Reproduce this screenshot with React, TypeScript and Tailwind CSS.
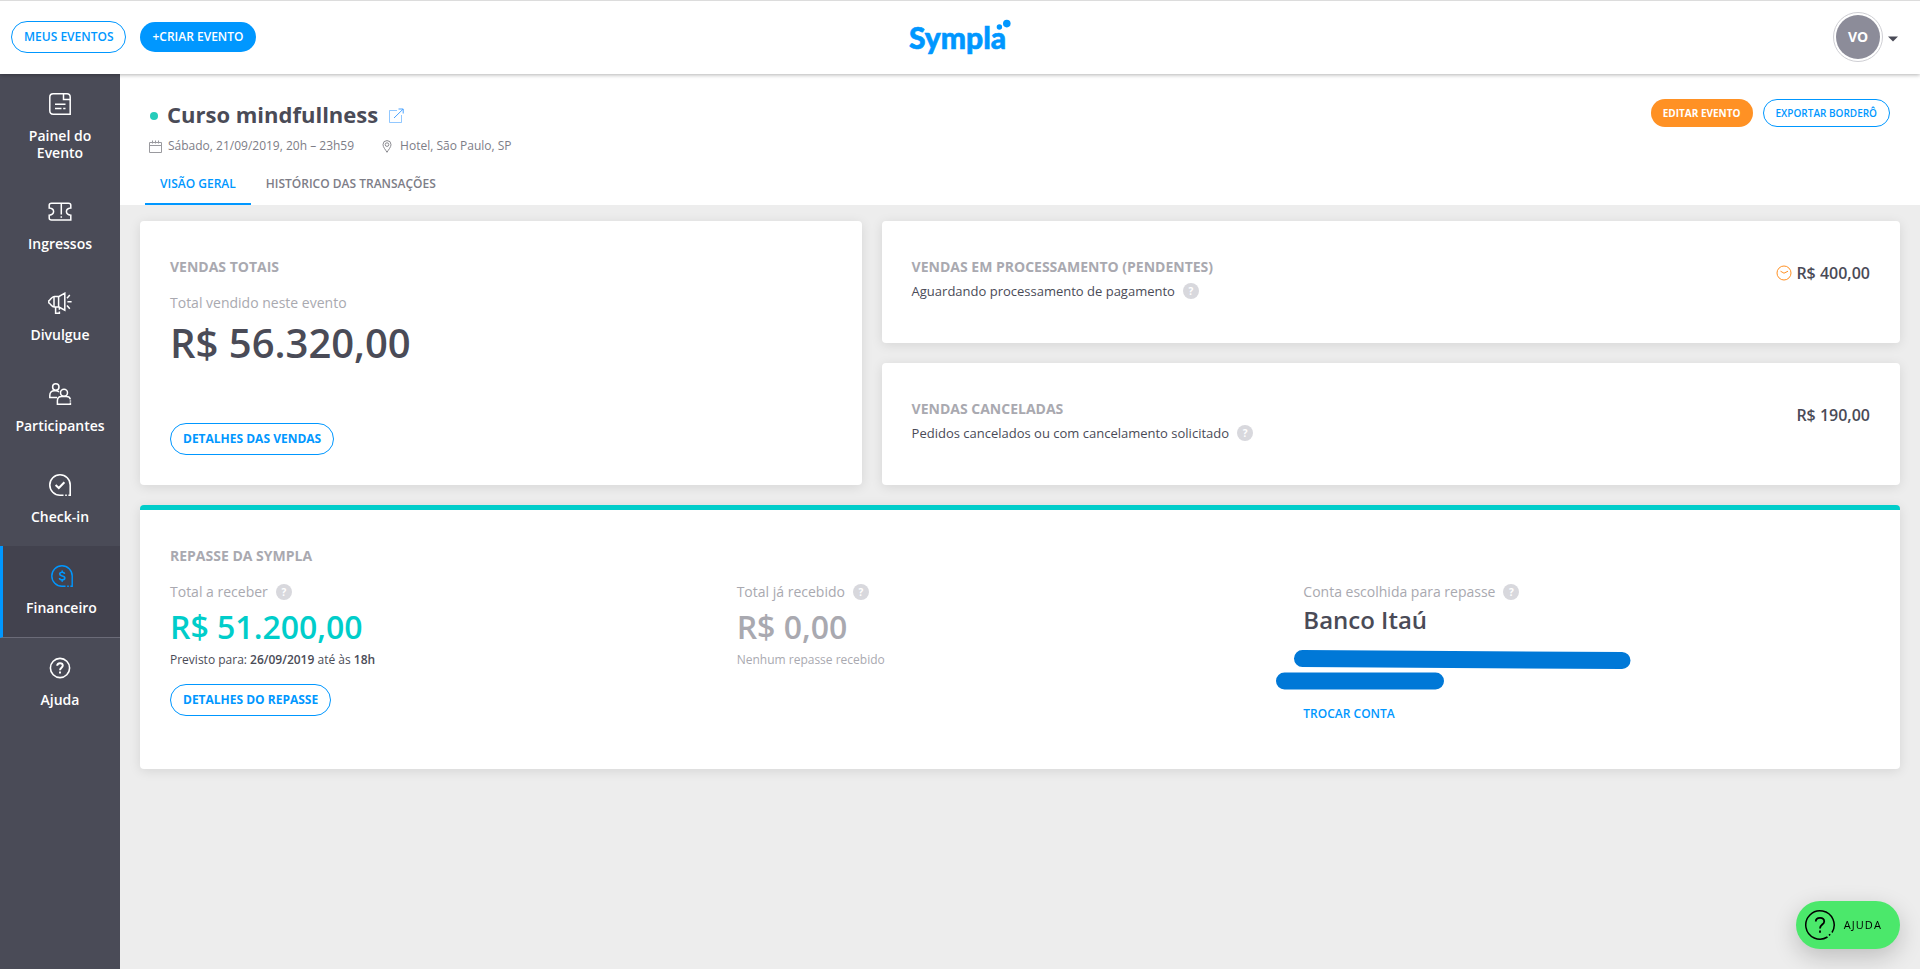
import React from 'react';
import type { ReactNode } from 'react';

const PanelIcon = () => (
    <svg viewBox="0 0 24 24" className="w-6 h-6" fill="none" stroke="currentColor" strokeWidth="1.5">
        <path d="M15.5 1.8H5.2C3.2 1.8 1.8 3.2 1.8 5.2V18.8C1.8 20.8 3.2 22.2 5.2 22.2H22.2V7.5" />
        <path d="M15.5 1.8V7.5H22.2V5C22.2 3 21 1.8 19 1.8Z" />
        <path d="M7 12.2H17.5M7 16.5H13.5M15.2 16.5H17.5" />
    </svg>
);

const TicketIcon = () => (
    <svg viewBox="0 0 24 24" className="w-6 h-6" fill="none" stroke="currentColor" strokeWidth="1.5">
        <path d="M3.5 3.2H20.5C22 3.2 22.8 4 22.8 5.2V8C20.6 8.2 18.4 9.6 18.4 11.6C18.4 13.6 20.6 15 22.8 15.2V20H3.5C2 20 1.2 19.2 1.2 18V15.2C3.4 15 5.6 13.6 5.6 11.6C5.6 9.6 3.4 8.2 1.2 8V5.2C1.2 4 2 3.2 3.5 3.2Z" />
        <path d="M13.3 3.2V14.6M13.3 16.2V17.8" />
    </svg>
);

const MegaphoneIcon = () => (
    <svg viewBox="0 0 24 24" className="w-6 h-6" fill="none" stroke="currentColor" strokeWidth="1.5">
        <path d="M16.8 2.2L11 5.4H6.4C3.6 5.4 2.8 8.8 0.8 9.8V11.8C2.8 12.8 3.6 16 6.4 16H11L16.8 19.2Z" />
        <path d="M6 5.4V16M10.6 5.4V16M7.6 16V22.2H11.4V20.4M11.4 18.8V16" />
        <path d="M19 7.2L21.8 4M19.4 10.8H23.6M19 14.4L21.8 17.8" />
    </svg>
);

const PeopleIcon = () => (
    <svg viewBox="0 0 24 24" className="w-6 h-6" fill="none" stroke="currentColor" strokeWidth="1.5">
        <circle cx="7.8" cy="5" r="3.2" />
        <path d="M9 15.4H1.8V13.4C1.8 10.4 3.4 8.8 6.4 8.8H7.8C9.2 8.8 10.2 9.2 11 10" />
        <circle cx="16" cy="10.8" r="3.5" />
        <path d="M22.4 17.4C22 15.6 20.4 14.6 18.4 14.6H13.6C11 14.6 9.4 16.2 9.4 18.8V22.2H22.4V20.6" />
        <path d="M22.4 18.4V19.6" />
    </svg>
);

const CheckinIcon = () => (
    <svg viewBox="0 0 24 24" className="w-6 h-6" fill="none" stroke="currentColor" strokeWidth="1.6">
        <path d="M15.5 22.2H12A10.2 10.2 0 1 1 22.2 12V22.2H20.4M17.2 22.2H18.8" />
        <path d="M7.6 12L10.8 15L16.4 9.2" strokeWidth="2" />
    </svg>
);

const FinanceIcon = () => (
    <svg viewBox="0 0 24 24" className="w-6 h-6" fill="none" stroke="#0097ff" strokeWidth="1.4">
        <path d="M15.5 22.2H12A10.2 10.2 0 1 1 22.2 12V22.2H20.4M17.2 22.2H18.8" />
        <path d="M14.6 9.8C14.4 8.7 13.4 8.2 12.2 8.2C10.8 8.2 9.7 8.9 9.7 10.1C9.7 12.7 14.8 11.3 14.8 14C14.8 15.2 13.6 15.9 12.2 15.9C10.8 15.9 9.6 15.2 9.5 14M12.2 6.4V8.2M12.2 15.9V17.7" strokeWidth="1.6" />
    </svg>
);

const HelpIcon = () => (
    <svg viewBox="0 0 24 24" className="w-6 h-6" fill="none" stroke="currentColor" strokeWidth="1.6">
        <circle cx="12" cy="12" r="9.6" />
        <path d="M9.2 9.8C9.2 8.2 10.4 7.2 12 7.2C13.6 7.2 14.8 8.2 14.8 9.6C14.8 11.6 12 11.8 12 14.2M12 15.6V17.4" strokeWidth="1.9" />
    </svg>
);

const Logo = () => (
    <svg viewBox="0 0 104 42" className="w-[104px] h-[42px]" fill="#0097ff" role="img" aria-label="Sympla">
        <text x="1" y="33" fontFamily="Lato, sans-serif" fontWeight="900" fontSize="30" stroke="#0097ff" strokeWidth="0.6">
            Sympla
        </text>
        <circle cx="91.4" cy="11" r="2.7" />
        <circle cx="98.8" cy="7.6" r="3.8" />
    </svg>
);

const menu = [
    { label: 'Painel do Evento', icon: PanelIcon },
    { label: 'Ingressos', icon: TicketIcon },
    { label: 'Divulgue', icon: MegaphoneIcon },
    { label: 'Participantes', icon: PeopleIcon },
    { label: 'Check-in', icon: CheckinIcon },
    { label: 'Financeiro', icon: FinanceIcon, active: true },
    { label: 'Ajuda', icon: HelpIcon }
];

const HelpDot = () => (
    <button
        type="button"
        aria-label="Mais informações"
        className="w-4 h-4 shrink-0 rounded-full bg-[#d8d8dd] text-white text-[10px] leading-4 font-bold text-center"
    >
        ?
    </button>
);

const Card = ({ className = '', children }: { className?: string; children: ReactNode }) => (
    <section className={`bg-white rounded shadow-[0_2px_12px_rgba(0,0,0,0.1)] px-[30px] pt-9 pb-[30px] ${className}`}>
        {children}
    </section>
);

const CardTitle = ({ children }: { children: ReactNode }) => (
    <h2 className="text-sm leading-5 font-bold text-[#a9a9b0]">{children}</h2>
);

const OutlineButton = ({ className = '', children }: { className?: string; children: ReactNode }) => (
    <button
        type="button"
        className={`h-8 px-3 self-start rounded-full border border-[#0097ff] text-[#0097ff] text-xs font-bold whitespace-nowrap ${className}`}
    >
        {children}
    </button>
);

const App = () => {
    return (
        <div className="min-h-screen flex flex-col bg-[#ededed] text-[#4a4b57] font-['Open_Sans',sans-serif]">
            {/* Top bar */}
            <header className="relative z-10 h-[74px] grid grid-cols-3 items-center bg-white border-t border-[#dcdcdc] px-[11px] pb-px shadow-[0_1px_4px_rgba(0,0,0,0.3)]">
                <div className="flex items-center gap-3.5">
                    <button type="button" className="h-8 px-3 rounded-full border border-[#0097ff] text-[#0097ff] text-xs font-semibold">
                        MEUS EVENTOS
                    </button>
                    <button type="button" className="h-[30px] px-3 rounded-full bg-[#0097ff] text-white text-xs font-semibold">
                        +CRIAR EVENTO
                    </button>
                </div>
                <a href="#" className="justify-self-center">
                    <Logo />
                </a>
                <button type="button" className="justify-self-end mr-2.5 flex items-center gap-1">
                    <span className="w-[50px] h-[50px] rounded-full border border-[#cfcfd4] p-0.5 flex">
                        <span className="flex-1 rounded-full bg-[#8c8c99] text-white text-sm font-bold flex items-center justify-center">
                            VO
                        </span>
                    </span>
                    <svg viewBox="0 0 12 6" className="w-3 h-1.5 mt-1" fill="#4a4b57">
                        <path d="M1 0.5H11L6 5.5Z" />
                    </svg>
                </button>
            </header>

            <div className="flex flex-1">
                {/* Side menu */}
                <nav className="w-[120px] shrink-0 bg-[#4a4b57] text-white">
                    {menu.map((item) => {
                        const Icon = item.icon;
                        return (
                            <a
                                key={item.label}
                                href="#"
                                className={`flex flex-col items-center gap-[11px] pt-[18px] pb-[21px] px-2.5 text-center text-sm leading-[17px] font-semibold ${item.active
                                    ? 'bg-[#42424e] border-b border-l-[3px] border-b-[#6b6b78] border-l-[#0097ff]'
                                    : ''
                                    }`}
                            >
                                <Icon />
                                <span>{item.label}</span>
                            </a>
                        );
                    })}
                </nav>

                <main className="flex-1 min-w-0">
                    {/* Event header */}
                    <div className="bg-white pl-[25px] pr-[30px] pt-6">
                        <div className="flex items-start justify-between">
                            <div className="pl-1">
                                <div className="flex items-center">
                                    <span className="w-2 h-2 mt-1 ml-px rounded-full bg-[#25ccba]"></span>
                                    <h1 className="ml-[9px] text-[22px] leading-8 font-bold">Curso mindfullness</h1>
                                    <a href="#" aria-label="Abrir página do evento" className="ml-2.5 mt-1">
                                        <svg viewBox="0 0 16 16" className="w-4 h-4" fill="none" stroke="#4aa3ff">
                                            <path d="M9 2.5H1.5V14.5H13.5V7" strokeOpacity="0.6" />
                                            <path d="M6 10L15 1.2M10.5 1H15.2V5.5" />
                                        </svg>
                                    </a>
                                </div>
                                <div className="flex items-center mt-1.5 text-xs leading-5 text-[#7d7d87]">
                                    <svg viewBox="0 0 13 13" className="w-[13px] h-[13px] mr-1.5" fill="none" stroke="#9a9a9f">
                                        <path d="M0.5 2.5H12.5V12.5H0.5ZM0.5 5.5H12.5M3.5 0.5V3.5M6.5 0.5V3.5M9.5 0.5V3.5" />
                                    </svg>
                                    <span>Sábado, 21/09/2019, 20h – 23h59</span>
                                    <svg viewBox="0 0 10 13" className="w-2.5 h-[13px] ml-7 mr-2" fill="none" stroke="#8a8a90">
                                        <path d="M5 12.3C3.5 9.6 1 7.2 1 4.6A4 4 0 0 1 9 4.6C9 7.2 6.5 9.6 5 12.3Z" />
                                        <circle cx="5" cy="4.6" r="1.8" />
                                    </svg>
                                    <span>Hotel, São Paulo, SP</span>
                                </div>
                            </div>
                            <div className="flex gap-2.5 mt-px">
                                <button type="button" className="h-7 px-3 rounded-full bg-[#ff9124] text-white text-[10px] font-bold">
                                    EDITAR EVENTO
                                </button>
                                <button type="button" className="h-7 px-3 rounded-full border border-[#0097ff] text-[#0097ff] text-[10px] font-semibold">
                                    EXPORTAR BORDERÔ
                                </button>
                            </div>
                        </div>
                        <div className="flex mt-1.5 text-xs leading-5 font-semibold">
                            <a href="#" className="px-[15px] pt-3 pb-[9px] border-b-2 border-[#0097ff] text-[#0097ff]">
                                VISÃO GERAL
                            </a>
                            <a href="#" className="px-[15px] pt-3 pb-[9px] border-b-2 border-transparent text-[#7d7d87]">
                                HISTÓRICO DAS TRANSAÇÕES
                            </a>
                        </div>
                    </div>

                    {/* Cards */}
                    <div className="flex flex-col gap-5 px-5 pt-4 pb-5">
                        <div className="flex gap-5">
                            <Card className="w-[41%] shrink-0 flex flex-col">
                                <CardTitle>VENDAS TOTAIS</CardTitle>
                                <p className="mt-4 text-sm leading-5 text-[#a9a9b0]">Total vendido neste evento</p>
                                <p className="text-[40px] leading-[60px] font-semibold">R$ 56.320,00</p>
                                <OutlineButton className="mt-auto">DETALHES DAS VENDAS</OutlineButton>
                            </Card>

                            <div className="flex-1 flex flex-col gap-5">
                                <Card className="min-h-[122px] flex justify-between items-start">
                                    <div>
                                        <CardTitle>VENDAS EM PROCESSAMENTO (PENDENTES)</CardTitle>
                                        <p className="mt-1 text-[13px] leading-5 flex items-center gap-2">
                                            Aguardando processamento de pagamento
                                            <HelpDot />
                                        </p>
                                    </div>
                                    <p className="text-base leading-8 font-semibold flex items-center gap-1">
                                        <svg viewBox="0 0 16 16" className="w-4 h-4" fill="none" stroke="#ff9124">
                                            <circle cx="8" cy="8" r="7" />
                                            <path d="M4.5 6.2L8 8.2L12 6.2" />
                                        </svg>
                                        R$ 400,00
                                    </p>
                                </Card>
                                <Card className="min-h-[122px] flex justify-between items-start">
                                    <div>
                                        <CardTitle>VENDAS CANCELADAS</CardTitle>
                                        <p className="mt-1 text-[13px] leading-5 flex items-center gap-2">
                                            Pedidos cancelados ou com cancelamento solicitado
                                            <HelpDot />
                                        </p>
                                    </div>
                                    <p className="text-base leading-8 font-semibold">R$ 190,00</p>
                                </Card>
                            </div>
                        </div>

                        <Card className="min-h-[264px] border-t-[5px] border-[#00cdca]">
                            <CardTitle>REPASSE DA SYMPLA</CardTitle>
                            <div className="grid grid-cols-3 mt-4">
                                <div className="flex flex-col">
                                    <p className="text-sm leading-5 text-[#a9a9b0] flex items-center gap-2">
                                        Total a receber
                                        <HelpDot />
                                    </p>
                                    <p className="text-[32px] leading-[50px] font-semibold text-[#00cdca]">R$ 51.200,00</p>
                                    <p className="text-xs leading-4">
                                        Previsto para: <strong className="font-semibold">26/09/2019</strong> até às{' '}
                                        <strong className="font-semibold">18h</strong>
                                    </p>
                                    <OutlineButton className="mt-4">DETALHES DO REPASSE</OutlineButton>
                                </div>
                                <div className="text-[#a9a9b0]">
                                    <p className="text-sm leading-5 flex items-center gap-2">
                                        Total já recebido
                                        <HelpDot />
                                    </p>
                                    <p className="text-[32px] leading-[50px] font-semibold">R$ 0,00</p>
                                    <p className="text-xs leading-4">Nenhum repasse recebido</p>
                                </div>
                                <div>
                                    <p className="text-sm leading-5 text-[#a9a9b0] flex items-center gap-2">
                                        Conta escolhida para repasse
                                        <HelpDot />
                                    </p>
                                    <p className="text-2xl leading-9 font-semibold">Banco Itaú</p>
                                    {/* Account data covered by marker strokes */}
                                    <svg viewBox="0 0 356 40" className="w-[356px] h-10 -ml-7 mt-3" fill="none" stroke="#0078d7" strokeWidth="17" strokeLinecap="round">
                                        <path d="M27.5 8.5L347 10.5M9.5 31H160.5" />
                                    </svg>
                                    <a href="#" className="inline-block mt-4 text-xs leading-4 font-semibold text-[#0097ff]">
                                        TROCAR CONTA
                                    </a>
                                </div>
                            </div>
                        </Card>
                    </div>
                </main>
            </div>

            {/* Floating help */}
            <button
                type="button"
                className="fixed right-5 bottom-5 h-12 pl-2 pr-[18px] flex items-center gap-2 rounded-full bg-[#4be86b] text-black text-[11px] tracking-widest shadow-[0_8px_24px_rgba(0,0,0,0.2)]"
            >
                <svg viewBox="0 0 32 32" className="w-8 h-8" fill="none" stroke="currentColor" strokeWidth="1.5">
                    <path d="M23.5 28A14.2 14.2 0 1 1 28 23.5M25 26.4L26.2 25.2" />
                    <path d="M11.8 12.4C11.8 10 13.6 8.8 16 8.8C18.4 8.8 20.2 10.2 20.2 12.4C20.2 15.6 16 15.6 16 19.4M16 21.4V23.8" strokeWidth="1.8" />
                </svg>
                AJUDA
            </button>
        </div>
    );
};

export default App;
